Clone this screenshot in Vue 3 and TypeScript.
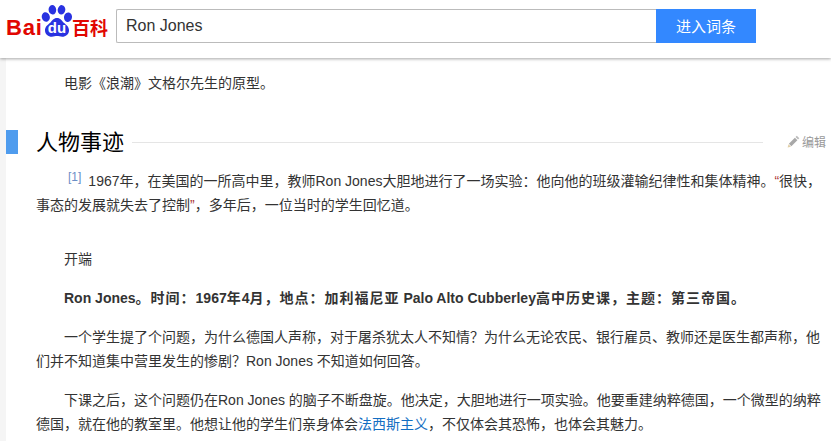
<script setup lang="ts">
const title = 'Ron Jones'
</script>

<template>
  <div class="page">
    <header class="top">
      <div class="logo">
        <span class="bai">Bai</span>
        <span class="paw">
          <svg width="32" height="32" viewBox="0 0 32 32">
            <g fill="#2932e1">
              <ellipse cx="4.800" cy="12" rx="4" ry="4.800" transform="rotate(-15 4.800 12)" />
              <ellipse cx="11.400" cy="4.800" rx="3.800" ry="4.700" transform="rotate(-5 11.400 4.800)" />
              <ellipse cx="20.500" cy="4.800" rx="3.800" ry="4.700" transform="rotate(8 20.500 4.800)" />
              <ellipse cx="27" cy="12.200" rx="4" ry="4.800" transform="rotate(12 27 12.200)" />
              <path d="M16 13c-3.400 0-4.700 2.700-6.800 4.700-2.600 2.300-5.400 4-5.200 8 .2 3.500 3.200 6 6.800 6 1.900 0 3.700-.7 5.200-.7s3.300.7 5.200.7c3.600 0 6.600-2.500 6.800-6 .2-4-2.600-5.700-5.200-8-2.100-2-3.400-4.700-6.800-4.700z" />
            </g>
          </svg>
          <span class="du">du</span>
        </span>
        <span class="baike">百科</span>
      </div>
      <div class="search">
        <div class="field">{{ title }}</div>
        <button class="go">进入词条</button>
      </div>
    </header>

    <div class="body">
      <main class="content">
        <p class="para lead">电影《浪潮》文格尔先生的原型。</p>

        <div class="heading">
          <span class="mark"></span>
          <h2>人物事迹</h2>
          <span class="rule"></span>
          <span class="edit">
            <svg width="13" height="13" viewBox="0 0 13 13">
              <path d="M9.800 .8l2.500 2.500-1.300 1.300L8.500 2.100z" fill="#bbb" />
              <path d="M7.900 2.700l2.500 2.500-6 6-2.500-2.500z" fill="#a8a8a8" />
              <path d="M1.500 9.200l2.500 2.500-3.400.9z" fill="#e0cfa8" />
            </svg>
            编辑
          </span>
        </div>

        <p class="para first">
          <sup class="ref">[1]</sup><span class="year">1967</span>年，在美国的一所高中里，教师Ron Jones大胆地进行了一场实验：他向他的班级灌输纪律性和集体精神。<span class="q">“</span>很快，事态的发展就失去了控制<span class="q">”</span>，多年后，一位当时的学生回忆道。
        </p>

        <p class="para start">开端</p>
        <p class="para strong">Ron Jones<span class="wide">。时间：</span>1967<span class="wide">年</span>4<span class="wide">月，地点：加利福尼亚</span> Palo Alto Cubberley<span class="wide">高中历史课，主题：第三帝国。</span></p>
        <p class="para">一个学生提了个问题，为什么德国人声称，对于屠杀犹太人不知情？为什么无论农民、银行雇员、教师还是医生都声称，他们并不知道集中营里发生的惨剧？Ron Jones 不知道如何回答。</p>
        <p class="para">下课之后，这个问题仍在Ron Jones 的脑子不断盘旋。他决定，大胆地进行一项实验。他要重建纳粹德国，一个微型的纳粹德国，就在他的教室里。他想让他的学生们亲身体会<a class="link">法西斯主义</a>，不仅体会其恐怖，也体会其魅力。</p>
      </main>
    </div>
  </div>
</template>

<style>
html, body { margin: 0; padding: 0; background: #fff; overflow: hidden; }
</style>

<style scoped>
.page {
  width: 831px;
  height: 441px;
  overflow: hidden;
  display: flex;
  flex-direction: column;
  font-family: Arial, "Liberation Sans", "Noto Sans CJK SC", sans-serif;
  color: #333;
}
.top {
  flex: none;
  height: 58px;
  display: flex;
  align-items: flex-start;
  background: #fff;
  box-shadow: 0 1px 3px rgba(0, 0, 0, 0.35);
  position: relative;
  z-index: 1;
}
.logo {
  width: 116px;
  height: 50px;
  display: flex;
  align-items: flex-start;
  padding-left: 6px;
  box-sizing: border-box;
  color: #e10601;
}
.bai {
  width: 35px;
  font-size: 22px;
  font-weight: 700;
  line-height: 22px;
  margin-top: 17px;
  letter-spacing: 0.8px;
  white-space: nowrap;
}
.paw {
  position: relative;
  width: 31px;
  height: 32px;
  margin-top: 5px;
}
.paw svg { display: block; }
.du {
  position: absolute;
  left: 3px;
  top: 15px;
  width: 26px;
  text-align: center;
  color: #fff;
  font-size: 15px;
  font-weight: 700;
  line-height: 16px;
}
.baike {
  font-size: 18px;
  font-weight: 700;
  line-height: 18px;
  margin-top: 20px;
  white-space: nowrap;
}
.search {
  display: flex;
  margin-top: 9px;
  height: 34px;
}
.field {
  width: 540px;
  height: 34px;
  box-sizing: border-box;
  border: 1px solid #bbb;
  border-right: 0;
  border-radius: 2px 0 0 2px;
  padding-left: 9px;
  font-size: 16px;
  line-height: 32px;
  color: #333;
}
.go {
  width: 100px;
  height: 34px;
  border: 0;
  padding: 0 0 2px;
  background: #3388ff;
  color: #fff;
  font-family: inherit;
  font-size: 15px;
}
.body {
  flex: 1;
  border-left: 6px solid #f5f5f5;
  min-height: 0;
}
.content { width: 790px; margin-left: 30px; }
.para {
  margin: 0 0 15px;
  font-size: 14px;
  line-height: 24px;
  text-indent: 28px;
  color: #333;
}
.lead { margin-top: 13px; }
.heading {
  display: flex;
  align-items: center;
  height: 28px;
  margin: 34px 0 12px;
  position: relative;
}
.mark {
  position: absolute;
  left: -30px;
  top: 1px;
  width: 12px;
  height: 24px;
  background: #4f9cee;
}
h2 {
  margin: 0;
  font-size: 22px;
  font-weight: 400;
  line-height: 28px;
  color: #000;
  white-space: nowrap;
}
.rule {
  flex: 1;
  height: 1px;
  background: #e5e5e5;
  margin: 0 24px 1px 8px;
  align-self: center;
}
.edit {
  display: flex;
  align-items: center;
  gap: 2px;
  font-size: 12px;
  color: #999;
  white-space: nowrap;
  margin-bottom: 3px;
}
.first { margin-bottom: 30px; }
.ref {
  font-size: 12px;
  color: #6b8ec7;
  line-height: 0;
  vertical-align: 5px;
  margin-left: 4px;
  margin-right: 7px;
  text-indent: 0;
}
.q { color: #a33; }
.year { color: #333; }
.start { margin-bottom: 15px; }
.strong { font-weight: 700; }
.wide { letter-spacing: 1px; }
.link { color: #136ec2; }
</style>
